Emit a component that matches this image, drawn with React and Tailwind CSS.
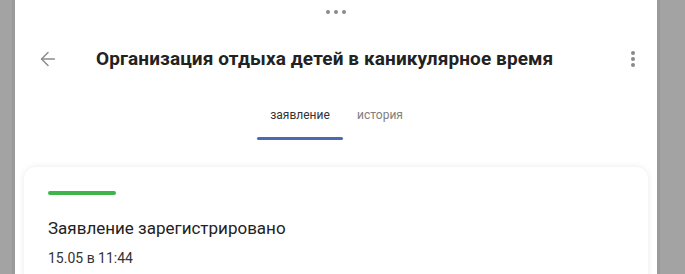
import { ArrowLeft } from 'lucide-react';

const Dot = () => <span className="block w-[4px] h-[4px] rounded-full bg-[#8a8a8a]" />;

export default function App() {
    return (
        <div className="flex w-[685px] h-[274px] overflow-hidden bg-[#a3a3a3] font-['Roboto',sans-serif]">
            <div className="w-[15px] shrink-0 border-r-[3px] border-[#9a9a9a]" />
            <div className="flex flex-col w-[642px] shrink-0 bg-white">
                {/* drag handle */}
                <div className="flex shrink-0 justify-center gap-[4px] pt-[10px] h-[20px]">
                    <Dot />
                    <Dot />
                    <Dot />
                </div>

                {/* header */}
                <div className="flex shrink-0 items-center h-[40px] mt-[19px] pl-[22px] pr-[22px]">
                    <ArrowLeft size={22} strokeWidth={1.6} className="text-[#8c8c8c]" />
                    <h1 className="flex-1 ml-[37px] text-[19px] font-bold text-[#222] tracking-[0.1px]">
                        Организация отдыха детей в каникулярное время
                    </h1>
                    <div className="flex flex-col gap-[2px]">
                        <Dot />
                        <Dot />
                        <Dot />
                    </div>
                </div>

                {/* tabs */}
                <div className="flex shrink-0 justify-center gap-[14px] mt-[26px] pr-[12px]">
                    <div className="flex flex-col items-center w-[86px]">
                        <span className="text-[12px] text-[#333] leading-[20px]">заявление</span>
                        <span className="block w-full h-[3px] mt-[12px] bg-[#4a69b3] rounded-full" />
                    </div>
                    <div className="flex flex-col items-center w-[46px]">
                        <span className="text-[12px] text-[#808080] leading-[20px]">история</span>
                    </div>
                </div>

                {/* card */}
                <div className="shrink-0 mx-[9px] mt-[27px] rounded-[12px] bg-white shadow-[0_0_6px_rgba(0,0,0,0.09)] px-[24px] pt-[24px] pb-[20px]">
                    <span className="block w-[68px] h-[4px] bg-[#3db54a] rounded-full" />
                    <div className="mt-[21px] text-[17px] text-[#222] leading-[24px]">Заявление зарегистрировано</div>
                    <div className="mt-[9px] text-[14px] text-[#333] leading-[18px]">15.05 в 11:44</div>
                </div>
            </div>
            <div className="flex-1 border-l-[3px] border-[#9a9a9a]" />
        </div>
    );
}
